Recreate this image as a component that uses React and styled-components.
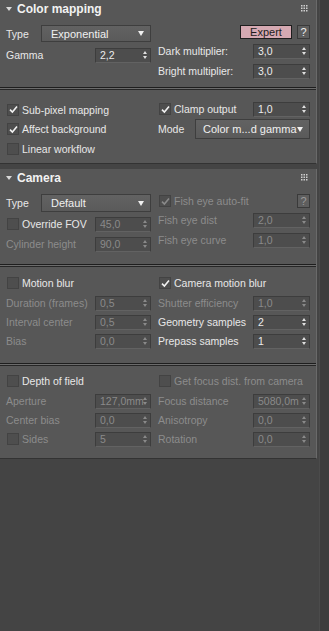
import React from 'react';
import styled, { createGlobalStyle } from 'styled-components';

const GlobalStyle = createGlobalStyle`
  html, body {
    margin: 0;
    padding: 0;
    background: #444444;
  }
  body {
    font-family: 'Liberation Sans', Arial, sans-serif;
    font-size: 10.5px;
    color: #e6e6e6;
  }
`;

const Page = styled.div`
  display: flex;
  width: 329px;
  height: 631px;
  background: #444444;
`;

const Main = styled.div`
  width: 318px;
  display: flex;
  flex-direction: column;
`;

const Strip = styled.div`
  width: 9px;
  margin-left: 2px;
  background: #3d3d3d;
  border-left: 1px solid #4b4b4b;
`;

const Rollout = styled.div`
  background: #575757;
  border-right: 1px solid #6a6a6a;
  border-bottom: 1px solid #333333;
  margin-bottom: ${(p) => p.mb || 0}px;
`;

const Header = styled.div`
  height: 18px;
  display: flex;
  align-items: center;
  padding-left: 6px;
  font-weight: bold;
  font-size: 12px;
  color: #f2f2f2;
  position: relative;
`;

const Caret = styled.span`
  width: 0;
  height: 0;
  border-left: 3px solid transparent;
  border-right: 3px solid transparent;
  border-top: 4px solid #d8d8d8;
  margin-right: 5px;
`;

const Grip = styled.svg`
  position: absolute;
  right: 8px;
  top: 5px;
`;

const Section = styled.div`
  display: flex;
  padding: ${(p) => p.pt}px 0 ${(p) => p.pb}px 0;
`;

const Column = styled.div`
  display: flex;
  flex-direction: column;
  gap: ${(p) => p.gap || 0}px;
  width: ${(p) => p.w}px;
  margin-left: ${(p) => p.ml}px;
`;

const Row = styled.div`
  display: flex;
  align-items: center;
  height: ${(p) => p.h || 16}px;
  color: ${(p) => (p.off ? '#8c8c8c' : '#e8e8e8')};
  white-space: nowrap;
`;

const Label = styled.span`
  flex: 1;
`;

const Separator = styled.div`
  height: 1px;
  background: #6b6b6b;
  border-top: 1px solid #1e1e1e;
  border-bottom: 1px solid #262626;
`;

const SpinnerBox = styled.div`
  width: ${(p) => p.w || 56}px;
  height: 15px;
  box-sizing: border-box;
  display: flex;
  align-items: center;
  padding-left: 4px;
  background: #4d4d4d;
  border: 1px solid #3d3d3d;
  border-bottom-color: #626262;
  color: ${(p) => (p.off ? '#8a8a8a' : '#ececec')};
  font-size: 10.5px;
`;

const SpinValue = styled.span`
  flex: 1;
  min-width: 0;
`;

const Arrows = styled.span`
  display: flex;
  flex-direction: column;
  gap: 2px;
  margin: 0 3px 0 1px;
`;

const Tri = styled.span`
  width: 0;
  height: 0;
  border-left: 2.5px solid transparent;
  border-right: 2.5px solid transparent;
  ${(p) => (p.up ? 'border-bottom' : 'border-top')}: 3px solid ${(p) => (p.off ? '#8a8a8a' : '#e0e0e0')};
`;

const Dropdown = styled.div`
  width: ${(p) => p.w}px;
  height: ${(p) => p.h || 18}px;
  box-sizing: border-box;
  margin-left: auto;
  display: flex;
  align-items: center;
  padding: 0 6px 0 ${(p) => p.pl || 9}px;
  background: linear-gradient(#626262, #5a5a5a);
  border: 1px solid #3e3e3e;
  color: #f0f0f0;
  font-size: 11px;
`;

const DropArrow = styled.span`
  margin-left: auto;
  width: 0;
  height: 0;
  border-left: 3px solid transparent;
  border-right: 3px solid transparent;
  border-top: 5px solid #f0f0f0;
`;

const Check = styled.span`
  width: 10px;
  height: 10px;
  margin: 0 3px 0 1px;
  background: #4e4e4e;
  border: 1px solid #434343;
  display: flex;
  align-items: center;
  justify-content: center;
  flex: none;
`;

const Button = styled.div`
  height: 14px;
  box-sizing: border-box;
  display: flex;
  align-items: center;
  justify-content: center;
  width: ${(p) => p.w}px;
  margin-left: ${(p) => p.ml || 0}px;
  background: ${(p) => (p.pink ? '#d5a9b2' : '#5e5e5e')};
  border: 1px solid ${(p) => (p.pink ? '#1e1e1e' : '#3a3a3a')};
  color: ${(p) => (p.pink ? '#1c1c1c' : p.off ? '#9a9a9a' : '#eeeeee')};
  font-size: 11px;
`;

const Spinner = ({ value, off, w }) => (
  <SpinnerBox off={off} w={w}>
    <SpinValue>{value}</SpinValue>
    <Arrows>
      <Tri up off={off} />
      <Tri off={off} />
    </Arrows>
  </SpinnerBox>
);

const CheckBox = ({ checked, off }) => (
  <Check>
    {checked && (
      <svg width="9" height="9" viewBox="0 0 9 9">
        <path d="M1 4.6 L3.4 7 L8 1.6" fill="none" stroke={off ? '#8a8a8a' : '#f2f2f2'} strokeWidth="1.6" />
      </svg>
    )}
  </Check>
);

const GripDots = () => (
  <Grip width="7" height="7" viewBox="0 0 7 7">
    {[0, 1, 2].map((r) =>
      [0, 1, 2].map((c) => <rect key={`${r}${c}`} x={c * 2.5} y={r * 2.5} width="1.5" height="1.5" fill="#cfcfcf" />)
    )}
  </Grip>
);

const Field = ({ label, value, off, w, h }) => (
  <Row off={off} h={h}>
    <Label>{label}</Label>
    <Spinner value={value} off={off} w={w} />
  </Row>
);

const CheckRow = ({ label, checked, off, children, h }) => (
  <Row off={off} h={h}>
    <CheckBox checked={checked} off={off} />
    <Label>{label}</Label>
    {children}
  </Row>
);

export default function App() {
  return (
    <Page>
      <GlobalStyle />
      <Main>
        <Rollout mb={5}>
          <Header>
            <Caret />
            Color mapping
            <GripDots />
          </Header>
          <Section pt={7} pb={8}>
            <Column w={145} ml={6} gap={5}>
              <Row h={17}>
                <Label>Type</Label>
                <Dropdown w={110} h={17}>
                  Exponential
                  <DropArrow />
                </Dropdown>
              </Row>
              <Field label="Gamma" value="2,2" />
            </Column>
            <Column w={152} ml={7} gap={4}>
              <Row h={14}>
                <Label />
                <Button pink w={52}>Expert</Button>
                <Button w={13} ml={5}>?</Button>
              </Row>
              <Field label="Dark multiplier:" value="3,0" w={57} />
              <Field label="Bright multiplier:" value="3,0" w={57} />
            </Column>
          </Section>
          <Separator />
          <Section pt={10} pb={5}>
            <Column w={145} ml={6}>
              <CheckRow label="Sub-pixel mapping" checked h={19} />
              <CheckRow label="Affect background" checked h={20} />
              <CheckRow label="Linear workflow" h={19} />
            </Column>
            <Column w={152} ml={7} gap={1}>
              <CheckRow label="Clamp output" checked h={18}>
                <Spinner value="1,0" w={57} />
              </CheckRow>
              <Row h={20}>
                <Label>Mode</Label>
                <Dropdown w={115} h={20} pl={7}>
                  Color m...d gamma
                  <DropArrow />
                </Dropdown>
              </Row>
            </Column>
          </Section>
        </Rollout>

        <Rollout>
          <Header>
            <Caret />
            Camera
            <GripDots />
          </Header>
          <Section pt={7} pb={12}>
            <Column w={145} ml={6} gap={4}>
              <Row h={18}>
                <Label>Type</Label>
                <Dropdown w={110} h={18}>
                  Default
                  <DropArrow />
                </Dropdown>
              </Row>
              <CheckRow label="Override FOV" h={16}>
                <Spinner value="45,0" off />
              </CheckRow>
              <Field label="Cylinder height" value="90,0" off />
            </Column>
            <Column w={152} ml={7} gap={4}>
              <CheckRow label="Fish eye auto-fit" checked off h={14}>
                <Button w={13} off>?</Button>
              </CheckRow>
              <Field label="Fish eye dist" value="2,0" off w={57} />
              <Field label="Fish eye curve" value="1,0" off w={57} />
            </Column>
          </Section>
          <Separator />
          <Section pt={7} pb={14}>
            <Column w={145} ml={6} gap={3}>
              <CheckRow label="Motion blur" h={18} />
              <Field label="Duration (frames)" value="0,5" off />
              <Field label="Interval center" value="0,5" off />
              <Field label="Bias" value="0,0" off />
            </Column>
            <Column w={152} ml={7} gap={3}>
              <CheckRow label="Camera motion blur" checked h={18} />
              <Field label="Shutter efficiency" value="1,0" off w={57} />
              <Field label="Geometry samples" value="2" w={57} />
              <Field label="Prepass samples" value="1" w={57} />
            </Column>
          </Section>
          <Separator />
          <Section pt={6} pb={11}>
            <Column w={145} ml={6} gap={3}>
              <CheckRow label="Depth of field" h={18} />
              <Field label="Aperture" value="127,0mm" off />
              <Field label="Center bias" value="0,0" off />
              <CheckRow label="Sides" off h={16}>
                <Spinner value="5" off />
              </CheckRow>
            </Column>
            <Column w={152} ml={7} gap={3}>
              <CheckRow label="Get focus dist. from camera" off h={18} />
              <Field label="Focus distance" value="5080,0m" off w={57} />
              <Field label="Anisotropy" value="0,0" off w={57} />
              <Field label="Rotation" value="0,0" off w={57} />
            </Column>
          </Section>
        </Rollout>
      </Main>
      <Strip />
    </Page>
  );
}
